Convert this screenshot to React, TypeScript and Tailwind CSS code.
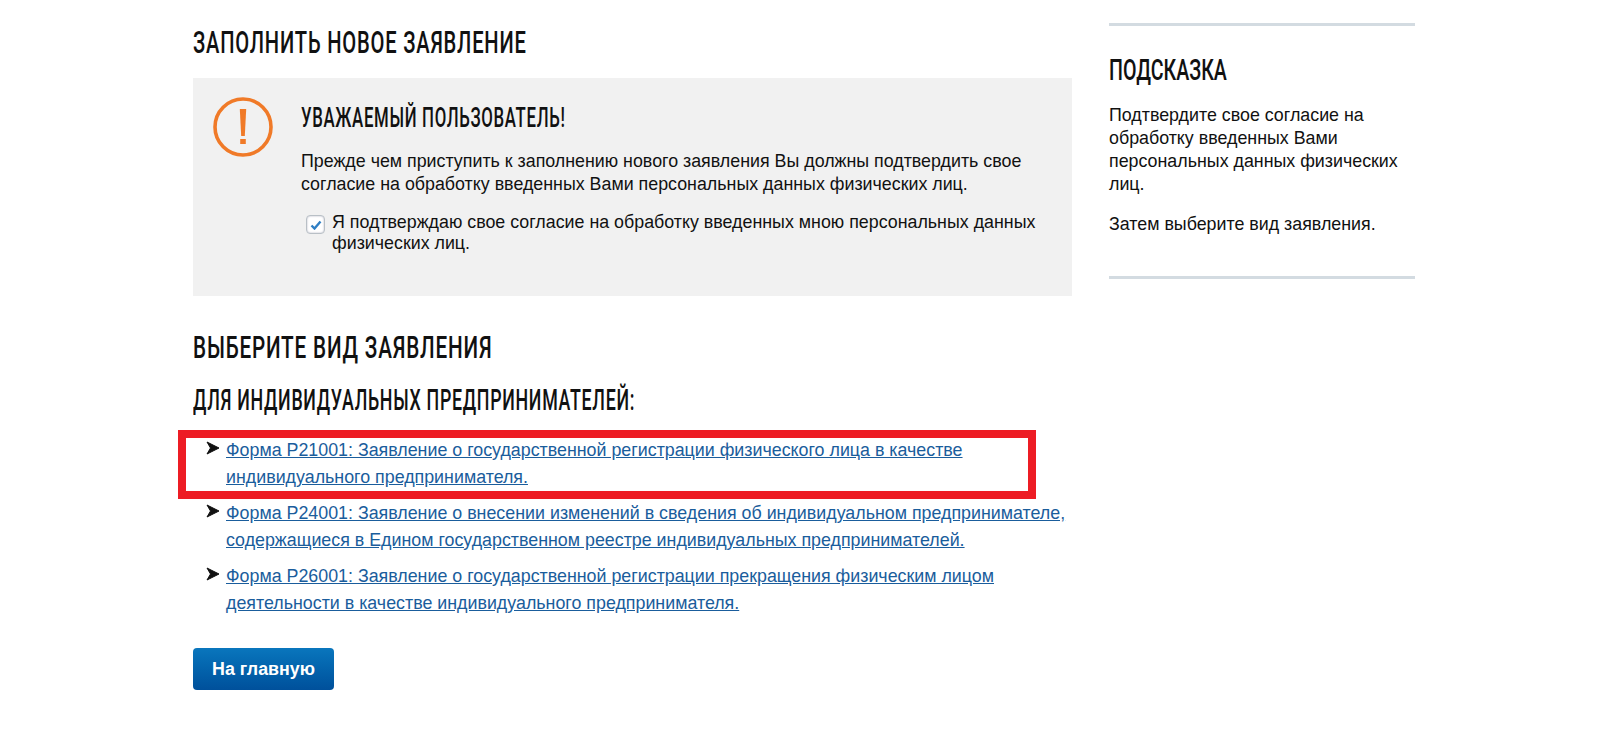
const body = "font-['Liberation_Sans',Arial,sans-serif]";

function Heading({ text, size, scale }: { text: string; size: string; scale: string }) {
  return (
    <div className={`font-['Roboto',sans-serif] font-medium uppercase text-[#111] whitespace-nowrap origin-left ${size} ${scale}`}>
      {text}
    </div>
  );
}

function Arrow() {
  return (
    <svg width="14" height="14" viewBox="0 0 14 14" className="shrink-0 mt-[4px]">
      <path d="M1 1 L13 7 L1 13 L4.5 7 Z" fill="#111" stroke="#111" strokeWidth="1" strokeLinejoin="round" />
    </svg>
  );
}

function Item({ l1, l2, marker }: { l1: string; l2: string; marker?: boolean }) {
  return (
    <li className="relative flex gap-[6px]">
      <Arrow />
      <a href="#" className="text-[#1a5d9c] underline text-[17.84px] leading-[27px] whitespace-nowrap">
        {l1}
        <br />
        {l2}
      </a>
      {marker && (
        <div className="absolute left-[-28px] top-[-7px] w-[858px] h-[69px] border-[8px] border-[#ed1c24]" />
      )}
    </li>
  );
}

export default function App() {
  return (
    <div className={`${body} bg-white w-[1600px] h-[732px] overflow-hidden text-[17.84px] text-[#111] flex`}>
      <main className="ml-[193px] w-[879px] pt-[22px]">
        <Heading text="Заполнить новое заявление" size="text-[32px] leading-[40px] tracking-[0.04em]" scale="scale-x-[0.63]" />
        <section className="mt-[16px] h-[218px] bg-[#f1f1f1] flex">
          <svg width="64" height="64" viewBox="0 0 64 64" className="ml-[18px] mt-[17px] shrink-0">
            <circle cx="32" cy="32" r="28" fill="none" stroke="#f07a28" strokeWidth="3.6" />
            <path d="M28.8 14 H35.2 L33.8 41 H30.2 Z" fill="#f07a28" />
            <rect x="29.2" y="44" width="5.6" height="5" fill="#f07a28" />
          </svg>
          <div className="ml-[26px] pt-[24px]">
            <Heading text="Уважаемый пользователь!" size="text-[28px] leading-[32px] tracking-[0.04em]" scale="scale-x-[0.6]" />
            <p className="mt-[16px] leading-[23px] whitespace-nowrap">
              Прежде чем приступить к заполнению нового заявления Вы должны подтвердить свое
              <br />
              согласие на обработку введенных Вами персональных данных физических лиц.
            </p>
            <div className="mt-[16px] ml-[5px] flex gap-[7px]">
              <span className="mt-[3px] w-[19px] h-[19px] shrink-0 rounded-[4px] border border-[#b9c0c6] bg-white shadow-[inset_0_0_2px_#aab] flex items-center justify-center">
                <svg width="12" height="10" viewBox="0 0 12 10">
                  <path d="M1.5 5.5 L4.5 8.5 L10.5 1.5" fill="none" stroke="#2f7fc4" strokeWidth="2.4" />
                </svg>
              </span>
              <p className="leading-[21px] whitespace-nowrap">
                Я подтверждаю свое согласие на обработку введенных мною персональных данных
                <br />
                физических лиц.
              </p>
            </div>
          </div>
        </section>
        <div className="mt-[31px]">
          <Heading text="Выберите вид заявления" size="text-[32px] leading-[40px] tracking-[0.04em]" scale="scale-x-[0.646]" />
        </div>
        <div className="mt-[16px]">
          <Heading text="Для индивидуальных предпринимателей:" size="text-[29px] leading-[34px] tracking-[0.04em]" scale="scale-x-[0.614]" />
        </div>
        <ul className="mt-[20px] ml-[13px] flex flex-col gap-[9px]">
          <Item
            marker
            l1="Форма Р21001: Заявление о государственной регистрации физического лица в качестве"
            l2="индивидуального предпринимателя."
          />
          <Item
            l1="Форма Р24001: Заявление о внесении изменений в сведения об индивидуальном предпринимателе,"
            l2="содержащиеся в Едином государственном реестре индивидуальных предпринимателей."
          />
          <Item
            l1="Форма Р26001: Заявление о государственной регистрации прекращения физическим лицом"
            l2="деятельности в качестве индивидуального предпринимателя."
          />
        </ul>
        <button className="mt-[31px] w-[141px] h-[42px] rounded-[4px] bg-gradient-to-b from-[#0a76bd] to-[#00509b] text-white font-bold text-[17.84px]">
          На главную
        </button>
      </main>
      <aside className="ml-[37px] w-[306px] mt-[23px] h-[256px] border-y-[3px] border-[#d3dbe1] pt-[26px]">
        <Heading text="Подсказка" size="text-[29px] leading-[36px]" scale="scale-x-[0.678]" />
        <p className="mt-[16px] leading-[23px] whitespace-nowrap">
          Подтвердите свое согласие на
          <br />
          обработку введенных Вами
          <br />
          персональных данных физических
          <br />
          лиц.
        </p>
        <p className="mt-[17px] leading-[23px]">Затем выберите вид заявления.</p>
      </aside>
    </div>
  );
}
